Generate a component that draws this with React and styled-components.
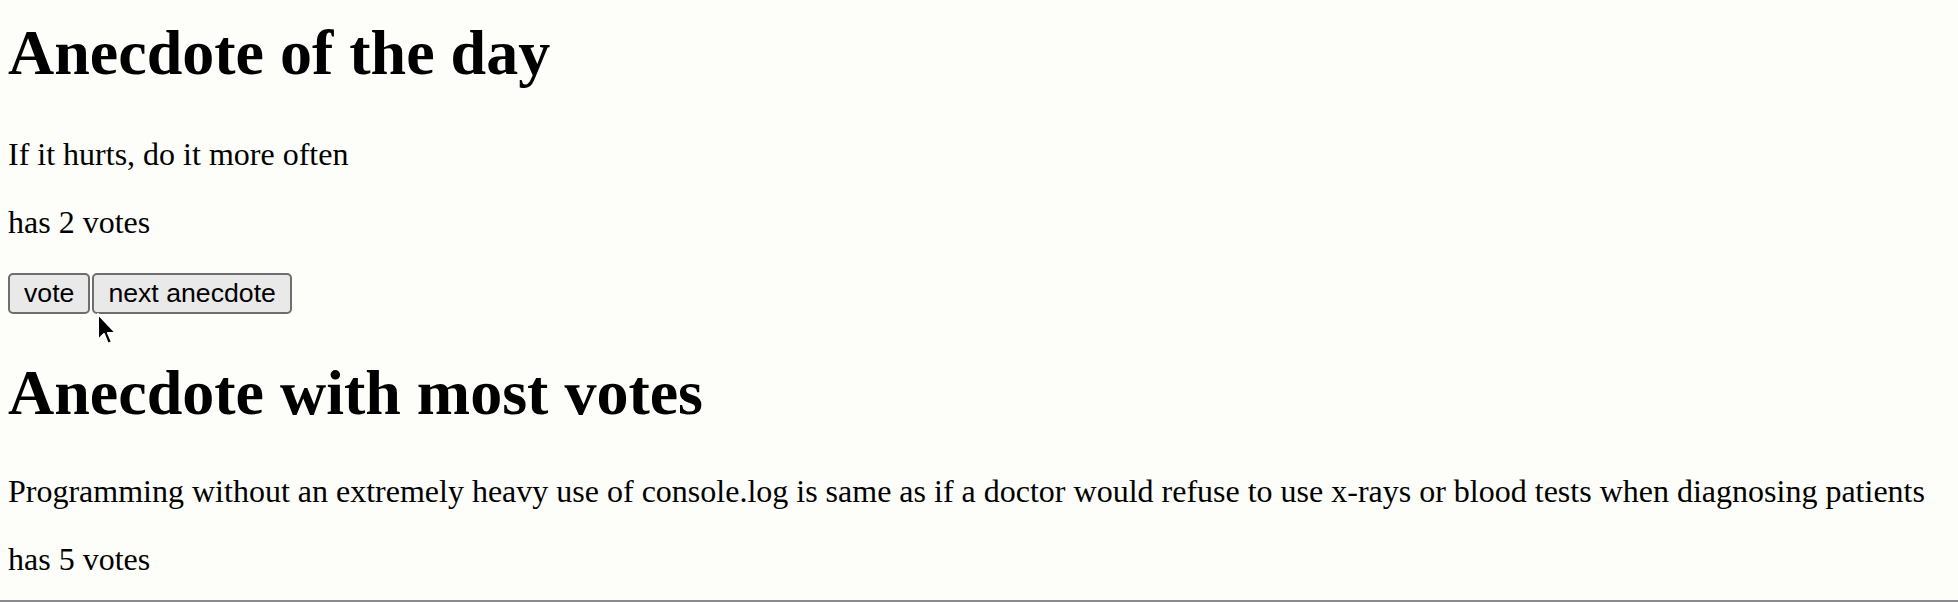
import React, { useState } from 'react';
import styled, { createGlobalStyle } from 'styled-components';

const anecdotes = [
  'If it hurts, do it more often',
  'Programming without an extremely heavy use of console.log is same as if a doctor would refuse to use x-rays or blood tests when diagnosing patients',
];

const GlobalStyle = createGlobalStyle`
  html, body {
    margin: 0;
    padding: 0;
    background: #fdfdf9;
  }
  body {
    font-family: "Liberation Serif", "Times New Roman", serif;
    color: #000;
  }
`;

const Page = styled.div`
  position: relative;
  box-sizing: border-box;
  height: 602px;
  padding: 16px 0 0 8px;
  border-bottom: 2px solid #8a8a8e;
  overflow: hidden;
`;

const Title = styled.h1`
  font-size: 64px;
  font-weight: bold;
  line-height: 73.6px;
  margin: ${(p) => (p.first ? '0 0 46px' : '42px 0 42.88px')};
`;

const Text = styled.p`
  font-size: 32px;
  line-height: 36.8px;
  margin: 32px 0;
  white-space: nowrap;
`;

const Buttons = styled.div`
  display: flex;
  gap: 2px;
`;

const Button = styled.button`
  box-sizing: border-box;
  height: 41px;
  padding: 0 14px;
  font-family: "Liberation Sans", Arial, sans-serif;
  font-size: 26.67px;
  color: #000;
  background: #e9e9e9;
  border: 2px solid #6e6e6e;
  border-radius: 5px;
`;

const Cursor = styled.svg`
  position: absolute;
  left: 96px;
  top: 313px;
  pointer-events: none;
`;

export default function App() {
  const [selected] = useState(0);
  const [votes] = useState([2, 5]);
  const most = votes.indexOf(Math.max(...votes));

  return (
    <>
      <GlobalStyle />
      <Page>
        <Title first>Anecdote of the day</Title>
        <Text>{anecdotes[selected]}</Text>
        <Text>has {votes[selected]} votes</Text>
        <Buttons>
          <Button>vote</Button>
          <Button>next anecdote</Button>
        </Buttons>
        <Title>Anecdote with most votes</Title>
        <Text>{anecdotes[most]}</Text>
        <Text>has {votes[most]} votes</Text>
        <Cursor width="22" height="34" viewBox="0 0 22 34">
          <path
            d="M2 1 L2 27 L8 21 L12 31 L16 29 L12 20 L20 20 Z"
            fill="#000"
            stroke="#fff"
            strokeWidth="2"
            strokeLinejoin="round"
          />
        </Cursor>
      </Page>
    </>
  );
}
